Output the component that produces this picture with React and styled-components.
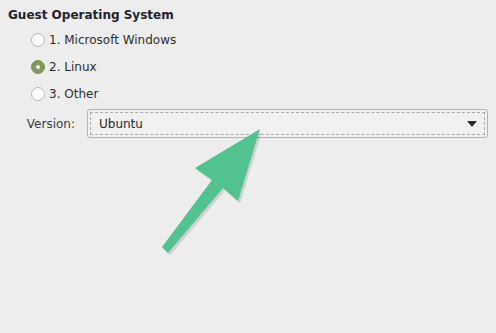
import React, { useState } from 'react'
import styled, { createGlobalStyle } from 'styled-components'

const GlobalStyle = createGlobalStyle`
    html, body {
        margin: 0;
        padding: 0;
        background: #ededed;
    }
    body {
        font-family: "DejaVu Sans", "Liberation Sans", sans-serif;
        font-size: 12px;
        color: #2e2e2e;
    }
`

const options = ['1. Microsoft Windows', '2. Linux', '3. Other']

function App() {
    const [selected, setSelected] = useState(1)
    return (
        <Page>
            <GlobalStyle />
            <Heading>Guest Operating System</Heading>
            <RadioList>
                {options.map((label, i) => (
                    <RadioRow key={label} onClick={() => setSelected(i)}>
                        <Radio checked={selected === i} />
                        <span>{label}</span>
                    </RadioRow>
                ))}
            </RadioList>
            <VersionRow>
                <Label>Version:</Label>
                <Combo>
                    <ComboInner>
                        <span>Ubuntu</span>
                        <Caret />
                    </ComboInner>
                </Combo>
            </VersionRow>
            <Pointer width="496" height="333" viewBox="0 0 496 333">
                <polygon
                    points="261,130 196,169 213,181 163,248 169,254 224,189 239,202"
                    fill="#000"
                    opacity="0.12"
                    transform="translate(1,1.5)"
                />
                <polygon
                    points="260,129 195,168 212,180 162,247 168,253 223,188 238,201"
                    fill="#52c28e"
                />
            </Pointer>
        </Page>
    )
}

export default App

const Page = styled.div`
    position: relative;
    width: 496px;
    height: 333px;
    box-sizing: border-box;
    padding: 7px 8px 0 8px;
    overflow: hidden;
`

const Heading = styled.div`
    font-weight: 700;
    font-size: 12px;
    line-height: 16px;
    color: #22222c;
`

const RadioList = styled.div`
    display: flex;
    flex-direction: column;
    padding: 3px 0 0 23px;
`

const RadioRow = styled.label`
    display: flex;
    align-items: center;
    gap: 4px;
    height: 27px;
    cursor: pointer;
    color: #2e2e2e;
`

const Radio = styled.span`
    width: 14px;
    height: 14px;
    border-radius: 50%;
    box-sizing: border-box;
    border: 1px solid ${props => props.checked ? '#7a9455' : '#b8b8b8'};
    background: ${props => props.checked ? '#80995a' : '#fbfbfb'};
    display: flex;
    align-items: center;
    justify-content: center;

    &::after {
        content: '';
        display: ${props => props.checked ? 'block' : 'none'};
        width: 4px;
        height: 4px;
        border-radius: 50%;
        background: #f4f4f4;
    }
`

const VersionRow = styled.div`
    display: flex;
    align-items: center;
    margin-top: 2px;
`

const Label = styled.div`
    width: 67px;
    text-align: right;
    padding-right: 12px;
    color: #3a3a3a;
`

const Combo = styled.div`
    width: 401px;
    height: 29px;
    box-sizing: border-box;
    border: 1px solid #b3b3b3;
    border-radius: 3px;
    background: #f1f1f1;
    padding: 2px;
`

const ComboInner = styled.div`
    height: 100%;
    box-sizing: border-box;
    border: 1px dashed #a8a8a8;
    display: flex;
    align-items: center;
    justify-content: space-between;
    padding: 0 7px 0 8px;
    color: #2a2a2a;
`

const Caret = styled.span`
    width: 0;
    height: 0;
    border-left: 5px solid transparent;
    border-right: 5px solid transparent;
    border-top: 6px solid #2b2b2b;
    margin-top: 1px;
`

const Pointer = styled.svg`
    position: absolute;
    top: 0;
    left: 0;
    pointer-events: none;
`
